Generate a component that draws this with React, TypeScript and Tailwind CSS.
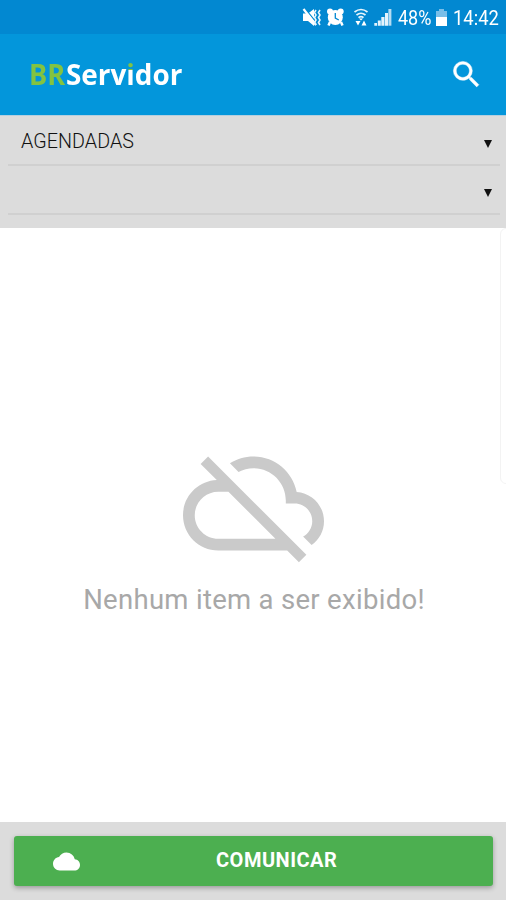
import React from 'react';

function StatusIcons() {
  return (
    <svg className="block h-[34px] w-[94px] shrink-0" viewBox="300 0 94 34" fill="#fff">
      <path d="M303 13.500h5l6-4.500v17l-6-5h-5z" />
      <path d="M304.500 8l13 16" stroke="#0288d1" strokeWidth="1.200" />
      <path d="M303.500 9l12.500 16" stroke="#fff" strokeWidth="2.200" />
      <path d="M316 10l-1.500 2.500 1.500 2.500-1.500 2.500 1.500 2.500-1.500 2.500 1.500 2.500M320 10l-1.500 2.500 1.500 2.500-1.500 2.500 1.500 2.500-1.500 2.500 1.500 2.500" fill="none" stroke="#e8f5fc" strokeWidth="1.600" />
      <circle cx="335.300" cy="17.500" r="7.500" />
      <circle cx="330" cy="11.500" r="3" />
      <circle cx="340.700" cy="11.500" r="3" />
      <path d="M330 22l-1.500 3.500M341 22l1.500 3.500" stroke="#fff" strokeWidth="2.500" />
      <path d="M335.300 13v5l3.500 2" fill="none" stroke="#0288d1" strokeWidth="1.300" />
      <path d="M354.500 12q6.500-5 13 0M356.500 15q4.500-3.500 9 0M358.500 17.700q2.500-2 5 0" fill="none" stroke="#e8f5fc" strokeWidth="1.700" />
      <path d="M359 18.500h4l-2 2zM355.500 21h5l-2.500 4.500zM364 20.500l2.500 5h-5z" />
      <path d="M374.300 23h2.700v2.700h-2.700zM377.800 20.500h3v5.200h-3zM381.300 17h3.200v8.700h-3.200zM385 13h3v12.700h-3z" fill="#e3f3fc" />
      <path d="M388.400 9h3v16.700h-3z" fill="#b4dcf3" />
    </svg>
  );
}

function StatusBar() {
  return (
    <div className="flex h-[34px] items-center bg-[#0288d1] pl-[300px] text-[20px] leading-[34px] text-white">
      <StatusIcons />
      <span className="mt-[2px] ml-[4px] w-[34px] origin-left scale-x-[0.9] whitespace-nowrap">48%</span>
      <svg className="ml-[4px] block h-[17px] w-[11px] shrink-0" viewBox="0 0 11 17">
        <path d="M3 0h5v2h3v6H0V2h3z" fill="#79bee8" />
        <path d="M0 8h11v9H0z" fill="#fff" />
      </svg>
      <span className="mt-[2px] ml-[6px] w-[46px] origin-left scale-x-[0.92] whitespace-nowrap">14:42</span>
    </div>
  );
}

function Header() {
  return (
    <header className="flex h-[81px] items-center justify-between bg-[#0396db] pr-[22px] pl-[29px]">
      <div className="-mt-[1px] flex items-baseline whitespace-nowrap font-['Open_Sans',sans-serif] text-[28px] leading-[40px] font-bold text-white">
        <span className="w-[37px]">
          <span className="inline-block origin-left scale-x-[0.97] text-[#83c341]">BR</span>
        </span>
        <span className="inline-block origin-left scale-x-[0.995]">
          Serv
          <span className="bg-linear-to-b from-[#83c341] from-[40%] to-white to-[40%] bg-clip-text text-transparent">i</span>
          dor
        </span>
      </div>
      <svg className="size-[35px]" viewBox="0 0 24 24" fill="#fff" stroke="#fff" strokeWidth="0.3">
        <path d="M15.5 14h-.79l-.28-.27A6.471 6.471 0 0 0 16 9.500 6.500 6.500 0 1 0 9.500 16c1.610 0 3.090-.590 4.230-1.570l.270.280v.790l5 4.990L20.490 19l-4.990-5zm-6 0C7.010 14 5 11.990 5 9.500S7.010 5 9.500 5 14 7.010 14 9.500 11.990 14 9.500 14z" />
      </svg>
    </header>
  );
}

function SelectRow({ label }: { label?: string }) {
  return (
    <div className="flex h-[49.500px] items-center justify-between border-b-2 border-[#d0d0d0] pr-[8px] pl-[13px]">
      <span className="mt-[5px] text-[19.700px] font-light tracking-[0.05px] text-[#111]">{label}</span>
      <svg className="mt-[8px] h-[8px] w-[8px]" viewBox="0 0 8 8">
        <path d="M0 0h8L4 8z" fill="#111" />
      </svg>
    </div>
  );
}

export default function App() {
  return (
    <div className="flex h-[900px] w-[506px] flex-col overflow-hidden bg-white font-[Roboto,sans-serif]">
      <StatusBar />
      <Header />
      <section className="h-[113px] border-t border-[#b5cfdf] bg-[#dcdcdc] pr-[6px] pl-[8px]">
        <SelectRow label="AGENDADAS" />
        <SelectRow />
      </section>
      <main className="relative flex flex-1 flex-col items-center">
        <div className="absolute top-0 -right-[6px] h-[256px] w-[12px] rounded-[7px] border border-[#f3f3f3]" />
        <svg className="mt-[205px] size-[141px]" viewBox="0 0 24 24" fill="#cacaca">
          <path d="M19.350 10.040C18.670 6.590 15.640 4 12 4c-1.480 0-2.850.430-4.010 1.170l1.460 1.460C10.210 6.230 11.080 6 12 6c3.040 0 5.500 2.460 5.500 5.500v.500H19c1.660 0 3 1.340 3 3 0 1.130-.640 2.110-1.560 2.620l1.450 1.450C23.160 18.160 24 16.680 24 15c0-2.640-2.050-4.780-4.650-4.960zM3 5.270l2.750 2.740C2.560 8.150 0 10.770 0 14c0 3.310 2.690 6 6 6h11.730l2 2L21 20.730 4.270 4 3 5.270zM7.730 10l8 8H6c-2.210 0-4-1.790-4-4s1.790-4 4-4h1.730z" />
        </svg>
        <p className="mt-[6px] pl-[2px] text-[27.500px] leading-[40px] tracking-[0.3px] whitespace-nowrap text-[#a8a8a8]">Nenhum item a ser exibido!</p>
      </main>
      <footer className="h-[78px] bg-[#dcdcdc] pt-[14px] pr-[13px] pl-[14px]">
        <button className="flex h-[50px] w-full items-center rounded-[3px] bg-[#4caf50] pl-[39px] text-white shadow-[0_2px_5px_rgba(0,0,0,0.3)]">
          <svg className="size-[27px]" viewBox="0 0 24 24" fill="#fff">
            <path d="M19.350 10.040C18.670 6.590 15.640 4 12 4 9.110 4 6.600 5.640 5.350 8.040 2.340 8.360 0 10.910 0 14c0 3.310 2.690 6 6 6h13c2.760 0 5-2.240 5-5 0-2.640-2.050-4.780-4.650-4.960z" />
          </svg>
          <span className="-mt-[2px] ml-[136px] text-[20px] leading-[48px] font-bold tracking-[0.5px]">COMUNICAR</span>
        </button>
      </footer>
    </div>
  );
}
